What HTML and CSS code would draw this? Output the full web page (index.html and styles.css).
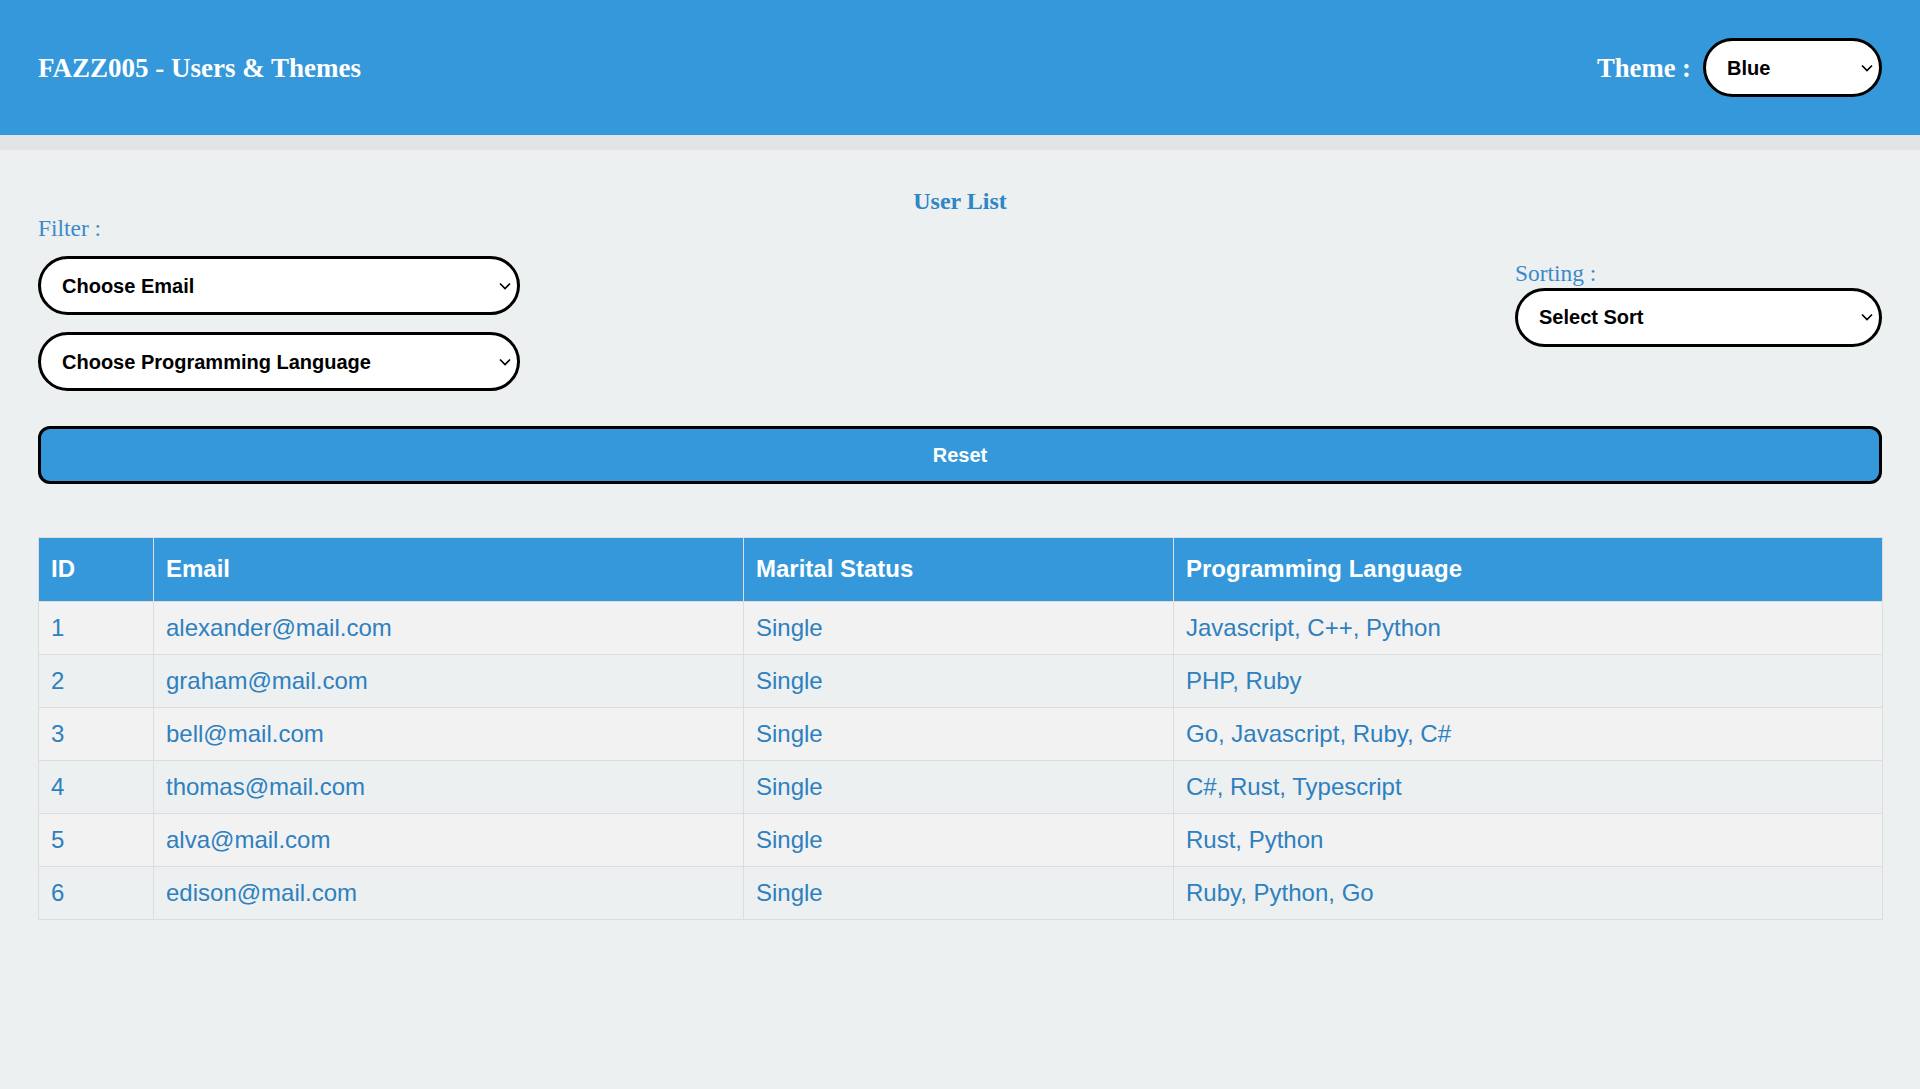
FILE: index.html
```html
<!DOCTYPE html>
<html lang="en">
<head>
<meta charset="utf-8">
<title>FAZZ005 - Users &amp; Themes</title>
<link rel="stylesheet" href="styles.css">
</head>
<body>
<header class="topbar">
  <h1 class="brand">FAZZ005 - Users &amp; Themes</h1>
  <div class="theme-picker">
    <label class="theme-label" for="theme">Theme :</label>
    <span class="select-wrap theme-wrap">
      <select id="theme" class="pill-select">
        <option>Blue</option>
        <option>Red</option>
        <option>Green</option>
      </select>
      <svg class="chev" width="12" height="8" viewBox="0 0 12 8"><path d="M1 1.5 L6 6.5 L11 1.5" fill="none" stroke="#000" stroke-width="1.7"/></svg>
    </span>
  </div>
</header>
<div class="strip"></div>
<main class="content">
  <h2 class="list-title">User List</h2>
  <section class="controls">
    <div class="filter-col">
      <div class="field-label">Filter :</div>
      <span class="select-wrap">
        <select class="pill-select">
          <option>Choose Email</option>
        </select>
        <svg class="chev" width="12" height="8" viewBox="0 0 12 8"><path d="M1 1.5 L6 6.5 L11 1.5" fill="none" stroke="#000" stroke-width="1.7"/></svg>
      </span>
      <span class="select-wrap">
        <select class="pill-select">
          <option>Choose Programming Language</option>
        </select>
        <svg class="chev" width="12" height="8" viewBox="0 0 12 8"><path d="M1 1.5 L6 6.5 L11 1.5" fill="none" stroke="#000" stroke-width="1.7"/></svg>
      </span>
    </div>
    <div class="sort-col">
      <div class="field-label">Sorting :</div>
      <span class="select-wrap">
        <select class="pill-select">
          <option>Select Sort</option>
        </select>
        <svg class="chev" width="12" height="8" viewBox="0 0 12 8"><path d="M1 1.5 L6 6.5 L11 1.5" fill="none" stroke="#000" stroke-width="1.7"/></svg>
      </span>
    </div>
  </section>
  <button class="reset-btn" type="button">Reset</button>
  <table class="users">
    <thead>
      <tr>
        <th class="c-id">ID</th>
        <th class="c-email">Email</th>
        <th class="c-status">Marital Status</th>
        <th class="c-lang">Programming Language</th>
      </tr>
    </thead>
    <tbody>
      <tr><td>1</td><td>alexander@mail.com</td><td>Single</td><td>Javascript, C++, Python</td></tr>
      <tr><td>2</td><td>graham@mail.com</td><td>Single</td><td>PHP, Ruby</td></tr>
      <tr><td>3</td><td>bell@mail.com</td><td>Single</td><td>Go, Javascript, Ruby, C#</td></tr>
      <tr><td>4</td><td>thomas@mail.com</td><td>Single</td><td>C#, Rust, Typescript</td></tr>
      <tr><td>5</td><td>alva@mail.com</td><td>Single</td><td>Rust, Python</td></tr>
      <tr><td>6</td><td>edison@mail.com</td><td>Single</td><td>Ruby, Python, Go</td></tr>
    </tbody>
  </table>
</main>
</body>
</html>
```

FILE: styles.css
```css
* { box-sizing: border-box; }

html, body {
  margin: 0;
  padding: 0;
}

html {
  background: #ecf0f1;
}

body {
  background: #ecf0f1;
  font-family: "Liberation Serif", "Times New Roman", serif;
}

.topbar {
  height: 135px;
  background: #3598db;
  padding: 0 38px;
  display: flex;
  align-items: center;
  justify-content: space-between;
}

.brand {
  margin: 0;
  color: #fff;
  font-family: "Liberation Serif", "Times New Roman", serif;
  font-weight: bold;
  font-size: 27px;
  line-height: 32px;
}

.theme-picker {
  display: flex;
  align-items: center;
  gap: 12px;
}

.theme-label {
  color: #fff;
  font-weight: bold;
  font-size: 26.67px;
  line-height: 32px;
}

.strip {
  height: 15px;
  background: #e3e4e4;
}

.content {
  padding: 37px 38px 40px;
}

.list-title {
  margin: 0;
  text-align: center;
  color: #2f86c4;
  font-size: 24px;
  line-height: 28px;
  font-weight: bold;
}

.controls {
  display: flex;
  justify-content: space-between;
  align-items: center;
}

.filter-col {
  width: 482px;
  display: flex;
  flex-direction: column;
}

.filter-col .field-label {
  margin-bottom: 15px;
}

.filter-col .select-wrap + .select-wrap {
  margin-top: 17px;
}

.sort-col {
  width: 367px;
  display: flex;
  flex-direction: column;
}

.sort-col .field-label {
  margin-bottom: 2px;
}

.field-label {
  color: #3a8ac9;
  font-size: 23.4px;
  line-height: 26px;
}

.select-wrap {
  position: relative;
  display: block;
}

.theme-wrap {
  width: 179px;
}

.pill-select {
  -webkit-appearance: none;
  appearance: none;
  display: block;
  width: 100%;
  height: 59px;
  border: 3px solid #000;
  border-radius: 30px;
  background: #fff;
  color: #000;
  padding: 0 30px 0 21px;
  font-family: "Liberation Sans", Arial, sans-serif;
  font-weight: bold;
  font-size: 20px;
  outline: none;
}

.chev {
  position: absolute;
  right: 9px;
  top: 50%;
  margin-top: -4px;
  pointer-events: none;
}

.reset-btn {
  display: block;
  width: 100%;
  height: 58px;
  margin-top: 35px;
  background: #3598db;
  color: #fff;
  border: 3px solid #000;
  border-radius: 12px;
  font-family: "Liberation Sans", Arial, sans-serif;
  font-weight: bold;
  font-size: 20px;
}

.users {
  margin-top: 53px;
  width: 100%;
  table-layout: fixed;
  border-collapse: collapse;
  border: 1px solid #dcdddd;
  font-family: "Liberation Sans", Arial, sans-serif;
  font-size: 24px;
}

.users th,
.users td {
  border: 1px solid #dcdddd;
  text-align: left;
  padding: 12px 12px;
  line-height: 28px;
}

.users th {
  background: #3598db;
  color: #fff;
  font-weight: bold;
  padding-top: 17px;
  padding-bottom: 18px;
}

.users td {
  color: #2e80be;
}

.users tbody tr:nth-child(odd) td {
  background: #f2f2f2;
}

.users tbody tr:nth-child(even) td {
  background: #ecf0f1;
}

.c-id { width: 115px; }
.c-email { width: 590px; }
.c-status { width: 430px; }
.c-lang { width: 709px; }
```
